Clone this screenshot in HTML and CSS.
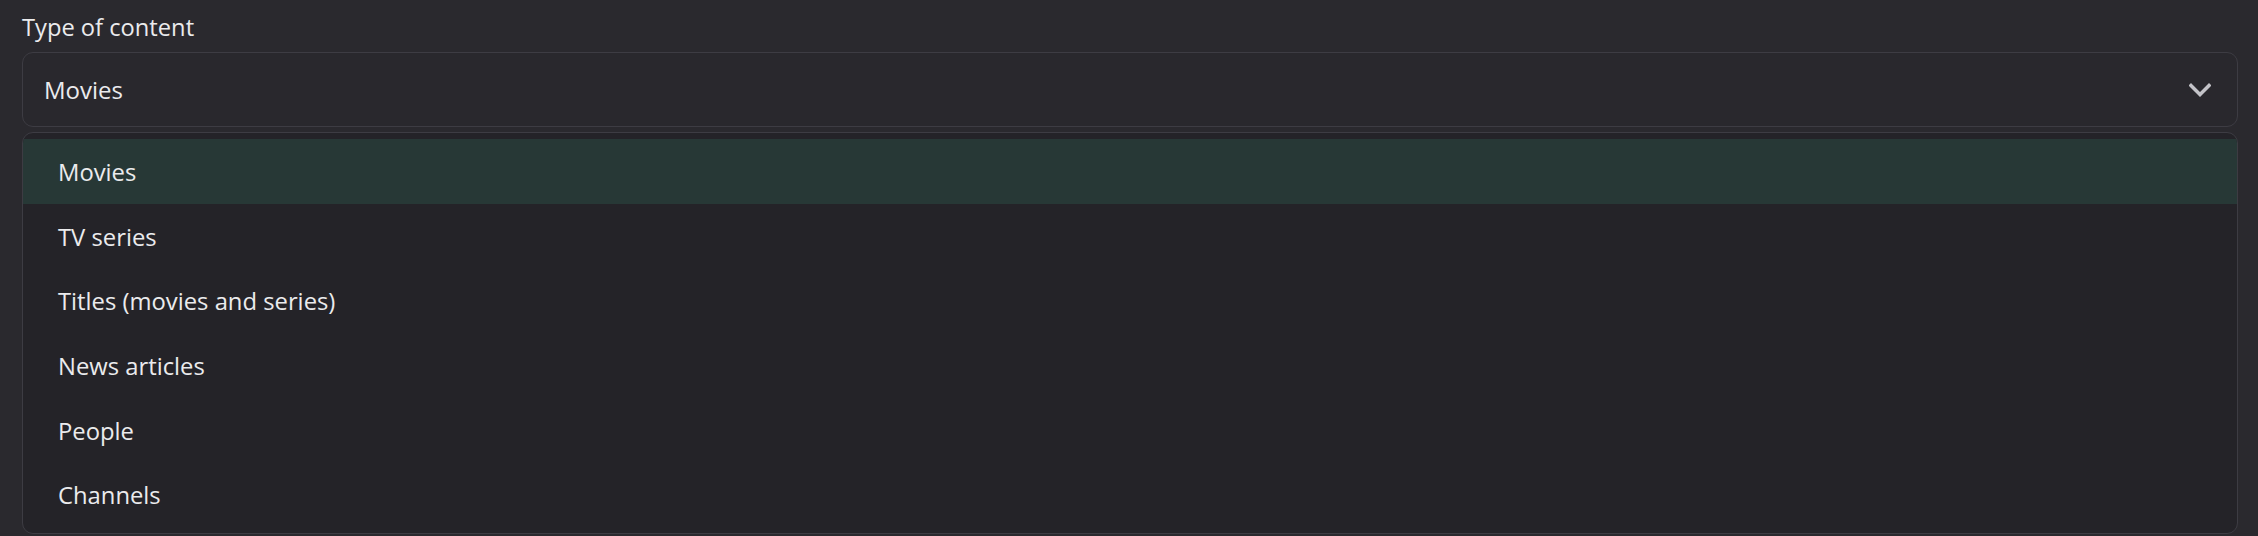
FILE: index.html
```html
<!DOCTYPE html>
<html lang="en">
<head>
    <meta charset="UTF-8">
    <meta name="viewport" content="width=device-width, initial-scale=1.0">
    <title>Type of content</title>
    <link rel="stylesheet" href="styles.css">
</head>
<body>

    <div class="field">
        <label class="field-label" for="contentType">Type of content</label>

        <!-- Select box -->
        <div id="contentType" class="select">
            <span class="select-value">Movies</span>
            <svg class="select-arrow" width="22" height="14" viewBox="0 0 22 14">
                <path d="M2 2.5 L11 11.5 L20 2.5" fill="none" stroke="#c3c3c8" stroke-width="3.4" stroke-linecap="square"/>
            </svg>
        </div>

        <!-- Dropdown list -->
        <ul class="options">
            <li class="option selected">Movies</li>
            <li class="option">TV series</li>
            <li class="option">Titles (movies and series)</li>
            <li class="option">News articles</li>
            <li class="option">People</li>
            <li class="option">Channels</li>
        </ul>
    </div>

</body>
</html>
```

FILE: styles.css
```css
/* General Styles */
body {
    margin: 0;
    background-color: #2a292e;
    color: #ebebed;
    font-family: "Open Sans", "Noto Sans", sans-serif;
    overflow: hidden;
}

/* Field */
.field {
    padding: 11px 20px 0 22px;
}

.field-label {
    display: block;
    font-size: 23.7px;
    line-height: 32px;
    margin-bottom: 9px;
}

/* Select Box */
.select {
    display: flex;
    align-items: center;
    justify-content: space-between;
    height: 73px;
    padding: 0 26px 0 21px;
    border: 1px solid #3d3c43;
    border-radius: 11px;
    background-color: #29282d;
    font-size: 24px;
}

.select-arrow {
    display: block;
}

/* Dropdown */
.options {
    list-style: none;
    margin: 5px 0 0;
    padding: 6px 0;
    border: 1px solid #3d3c43;
    border-radius: 11px;
    background-color: #242328;
    overflow: hidden;
}

.option {
    display: flex;
    align-items: center;
    height: 64.6px;
    padding: 2px 0 0 35px;
    box-sizing: border-box;
    font-size: 23.8px;
}

.option.selected {
    background-color: #273836;
}
```
